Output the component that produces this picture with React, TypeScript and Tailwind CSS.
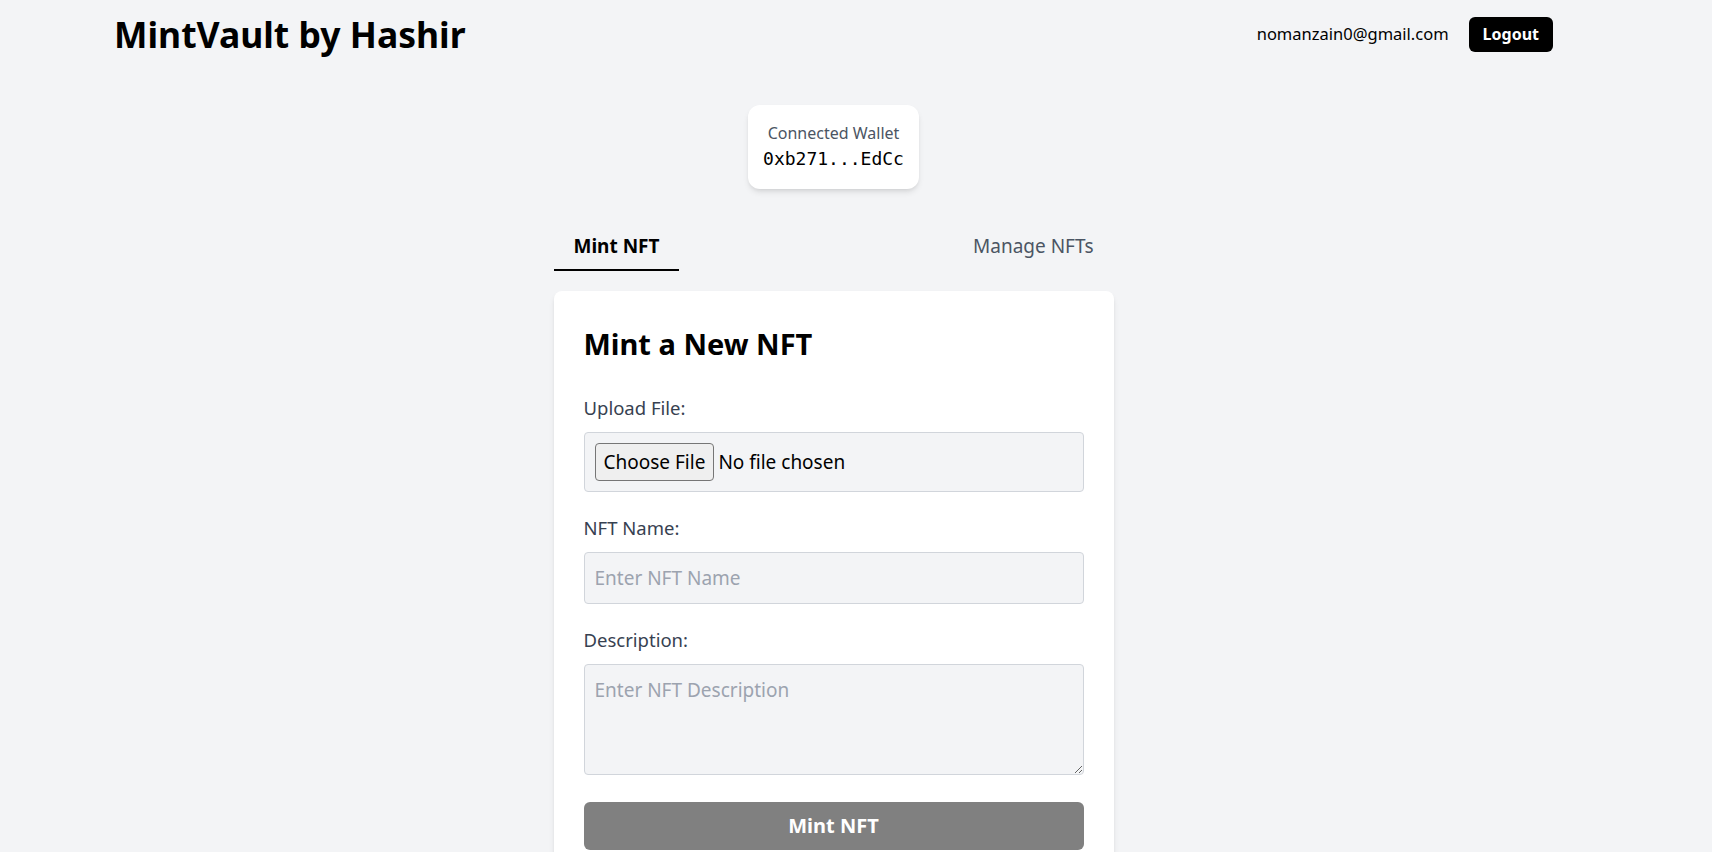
import React from "react";

export default function App() {
  return (
    <div className="min-h-screen bg-[#f3f4f6] font-['Noto_Sans',sans-serif] text-black">
      <div className="w-[1667px]">
        {/* Header */}
        <header className="flex items-center justify-between px-[114px] pt-[11px] pb-[9px]">
          <h1 className="text-[35.5px] leading-[46px] font-bold">MintVault by Hashir</h1>
          <div className="flex items-center gap-[20px]">
            <span className="text-[16.5px]">nomanzain0@gmail.com</span>
            <button className="h-[35px] rounded-md bg-black px-[14px] text-[16px] font-bold text-white">
              Logout
            </button>
          </div>
        </header>

        <main className="flex flex-col items-center">
          {/* Wallet */}
          <div className="mt-[39px] mb-[34px] rounded-xl bg-white px-[15px] py-4 text-center shadow-md">
            <div className="text-[16px] leading-6 text-[#4b5563]">Connected Wallet</div>
            <div className="font-['DejaVu_Sans_Mono',monospace] text-[18px] leading-7">0xb271...EdCc</div>
          </div>

          {/* Tabs */}
          <div className="mb-5 flex w-[560px] justify-between">
            <button className="border-b-2 border-black px-5 pt-[9px] pb-[9px] text-[19px] leading-7 font-bold">
              Mint NFT
            </button>
            <button className="border-b-2 border-transparent px-5 pt-[9px] pb-[9px] text-[19px] leading-7 text-[#4b5563]">
              Manage NFTs
            </button>
          </div>

          {/* Mint form */}
          <div className="w-[560px] rounded-lg bg-white px-[30px] pt-[35px] pb-8 shadow-md">
            <h2 className="mb-[32px] text-[29px] leading-9 font-bold">Mint a New NFT</h2>

            <label className="mb-2.5 block text-[18.5px] leading-7 text-[#374151]">Upload File:</label>
            <input
              type="file"
              className="mb-[22px] block w-full rounded border border-[#d1d5db] bg-[#f3f4f6] p-2.5 text-[19px] leading-7 file:mr-1 file:rounded-sm file:border file:border-[#767676] file:bg-[#efefef] file:px-2 file:py-1"
            />

            <label className="mb-2.5 block text-[18.5px] leading-7 text-[#374151]">NFT Name:</label>
            <input
              type="text"
              placeholder="Enter NFT Name"
              className="mb-[22px] block w-full rounded border border-[#d1d5db] bg-[#f3f4f6] px-2.5 py-[11px] text-[19px] leading-7 placeholder:text-[#9ca3af]"
            />

            <label className="mb-2.5 block text-[18.5px] leading-7 text-[#374151]">Description:</label>
            <textarea
              placeholder="Enter NFT Description"
              className="mb-[27px] block h-[111px] w-full rounded border border-[#d1d5db] bg-[#f3f4f6] px-2.5 py-[11px] text-[19px] leading-7 placeholder:text-[#9ca3af]"
            />

            <button className="h-[48px] w-full rounded-md bg-[#808080] text-[20px] font-bold text-white">
              Mint NFT
            </button>
          </div>
        </main>
      </div>
    </div>
  );
}
